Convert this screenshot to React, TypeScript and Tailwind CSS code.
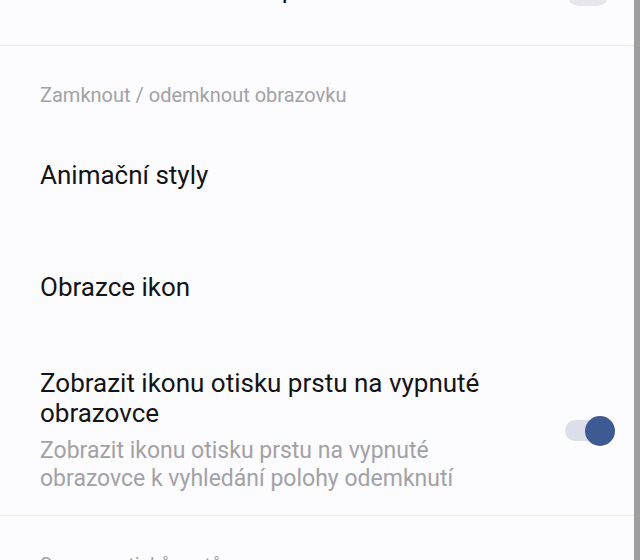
import React from "react";

const Toggle: React.FC = () => (
  <div className="relative w-[52px] h-[30px] flex items-center shrink-0">
    <div className="ml-[2px] w-[42px] h-[21px] rounded-full bg-[#dcdfea]" />
    <div className="absolute top-0 right-0 w-[30px] h-[30px] rounded-full bg-[#3e5a93]" />
  </div>
);

const Divider = () => <div className="h-px bg-[#ececef]" />;

const SectionHeader: React.FC<{ label: string }> = ({ label }) => (
  <div className="pt-[37px] pb-[12px] px-[40px]">
    <p className="text-[20px] leading-[24px] text-[#a2a2a6]">{label}</p>
  </div>
);

const SimpleRow: React.FC<{ title: string }> = ({ title }) => (
  <div className="h-[112px] flex items-center px-[40px]">
    <p className="text-[26px] leading-[30px] text-[#141414]">{title}</p>
  </div>
);

export default function App() {
  return (
    <div
      className="w-[640px] h-[560px] overflow-hidden bg-[#fcfbfe] flex"
      style={{ fontFamily: "Roboto, 'Noto Sans', sans-serif" }}
    >
      <div className="flex-1 overflow-hidden">
        {/* previous item, scrolled mostly out of view */}
        <div className="h-[45px] overflow-hidden">
          <div className="-mt-[56px] h-[90px] flex items-center justify-between pl-[40px] pr-[26px]">
            <p className="text-[26px] leading-[30px] text-[#141414] whitespace-nowrap">Zobrazovat animace při odemknutí</p>
            <div className="mt-[12px] w-[40px] h-[21px] rounded-full bg-[#e6e6ea] shrink-0" />
          </div>
        </div>
        <Divider />

        <SectionHeader label="Zamknout / odemknout obrazovku" />
        <SimpleRow title="Animační styly" />
        <SimpleRow title="Obrazce ikon" />

        <div className="flex items-center pl-[40px] pr-[19px] pt-[25px] pb-[22px]">
          <div className="flex-1 pr-[43px]">
            <p className="text-[26px] leading-[30px] text-[#141414]">
              Zobrazit ikonu otisku prstu na vypnuté obrazovce
            </p>
            <p className="mt-[9px] text-[23px] leading-[28px] text-[#a2a2a6]">
              Zobrazit ikonu otisku prstu na vypnuté obrazovce k vyhledání polohy odemknutí
            </p>
          </div>
          <Toggle />
        </div>
        <Divider />

        <SectionHeader label="Seznam otisků prstů" />
      </div>
      <div className="w-[6px] bg-[#9f9f9f] shrink-0" />
    </div>
  );
}
